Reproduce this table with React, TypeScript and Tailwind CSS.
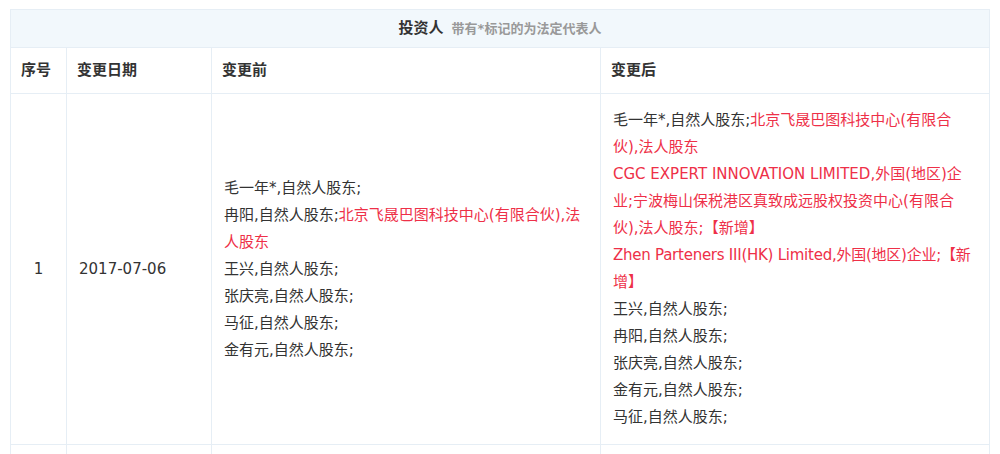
const red = 'text-[#ee3048]';

type Part = { text: string; red?: boolean; br?: boolean; tight?: boolean };

const before: Part[][] = [
  [{ text: '毛一年*,自然人股东;' }],
  [{ text: '冉阳,自然人股东;' }, { text: '北京飞晟巴图科技中心(有限合伙),法人股东', red: true }],
  [{ text: '王兴,自然人股东;' }],
  [{ text: '张庆亮,自然人股东;' }],
  [{ text: '马征,自然人股东;' }],
  [{ text: '金有元,自然人股东;' }],
];

const after: Part[][] = [
  [
    { text: '毛一年*,自然人股东;' },
    { text: '北京飞晟巴图科技中心(有限合', red: true, br: true },
    { text: '伙),法人股东', red: true },
  ],
  [
    {
      text: 'CGC EXPERT INNOVATION LIMITED,外国(地区)企业;宁波梅山保税港区真致成远股权投资中心(有限合伙),法人股东;【新增】',
      red: true,
    },
  ],
  [
    { text: 'Zhen Parteners III(HK) Limited,外国(地区)企业;【新', red: true, br: true, tight: true },
    { text: '增】', red: true },
  ],
  [{ text: '王兴,自然人股东;' }],
  [{ text: '冉阳,自然人股东;' }],
  [{ text: '张庆亮,自然人股东;' }],
  [{ text: '金有元,自然人股东;' }],
  [{ text: '马征,自然人股东;' }],
];

function Lines({ rows }: { rows: Part[][] }) {
  return (
    <div>
      {rows.map((row, i) => (
        <div key={i}>
          {row.map((p, j) => (
            <span
              key={j}
              className={`${p.red ? red : ''} ${p.tight ? 'tracking-[-0.25px] whitespace-nowrap' : ''}`}
            >
              {p.text}
              {p.br && <br />}
            </span>
          ))}
        </div>
      ))}
    </div>
  );
}

export default function App() {
  return (
    <div
      className="bg-white w-[1000px] h-[454px] overflow-hidden pt-[9px] pl-[10px] text-[#333] text-[15px]"
      style={{ fontFamily: '"DejaVu Sans", "Noto Sans CJK SC", sans-serif' }}
    >
      <table className="w-[979px] border-collapse table-fixed">
        <colgroup>
          <col className="w-[56px]" />
          <col className="w-[145px]" />
          <col className="w-[389px]" />
          <col className="w-[389px]" />
        </colgroup>
        <thead>
          <tr>
            <th colSpan={4} className="h-[38px] bg-[#f2f8fc] border border-[#e6eef5] text-center">
              <span className="text-[15px] font-bold text-[#333]">投资人</span>
              <span className="ml-2 text-[13px] font-bold text-[#999]">带有*标记的为法定代表人</span>
            </th>
          </tr>
          <tr className="text-left text-[15px] font-bold">
            <th className="h-[46px] px-[10px] border border-[#e6eef5]">序号</th>
            <th className="px-[10px] border border-[#e6eef5]">变更日期</th>
            <th className="px-[10px] border border-[#e6eef5]">变更前</th>
            <th className="px-[10px] border border-[#e6eef5]">变更后</th>
          </tr>
        </thead>
        <tbody className="leading-[27px]">
          <tr>
            <td className="border border-[#e6eef5] text-center align-middle">1</td>
            <td className="border border-[#e6eef5] px-[12px] align-middle">2017-07-06</td>
            <td className="border border-[#e6eef5] px-[12px] align-middle">
              <Lines rows={before} />
            </td>
            <td className="border border-[#e6eef5] px-[12px] py-[13px] align-middle">
              <Lines rows={after} />
            </td>
          </tr>
          <tr>
            <td className="h-[40px] border border-[#e6eef5]"></td>
            <td className="border border-[#e6eef5]"></td>
            <td className="border border-[#e6eef5]"></td>
            <td className="border border-[#e6eef5]"></td>
          </tr>
        </tbody>
      </table>
    </div>
  );
}
